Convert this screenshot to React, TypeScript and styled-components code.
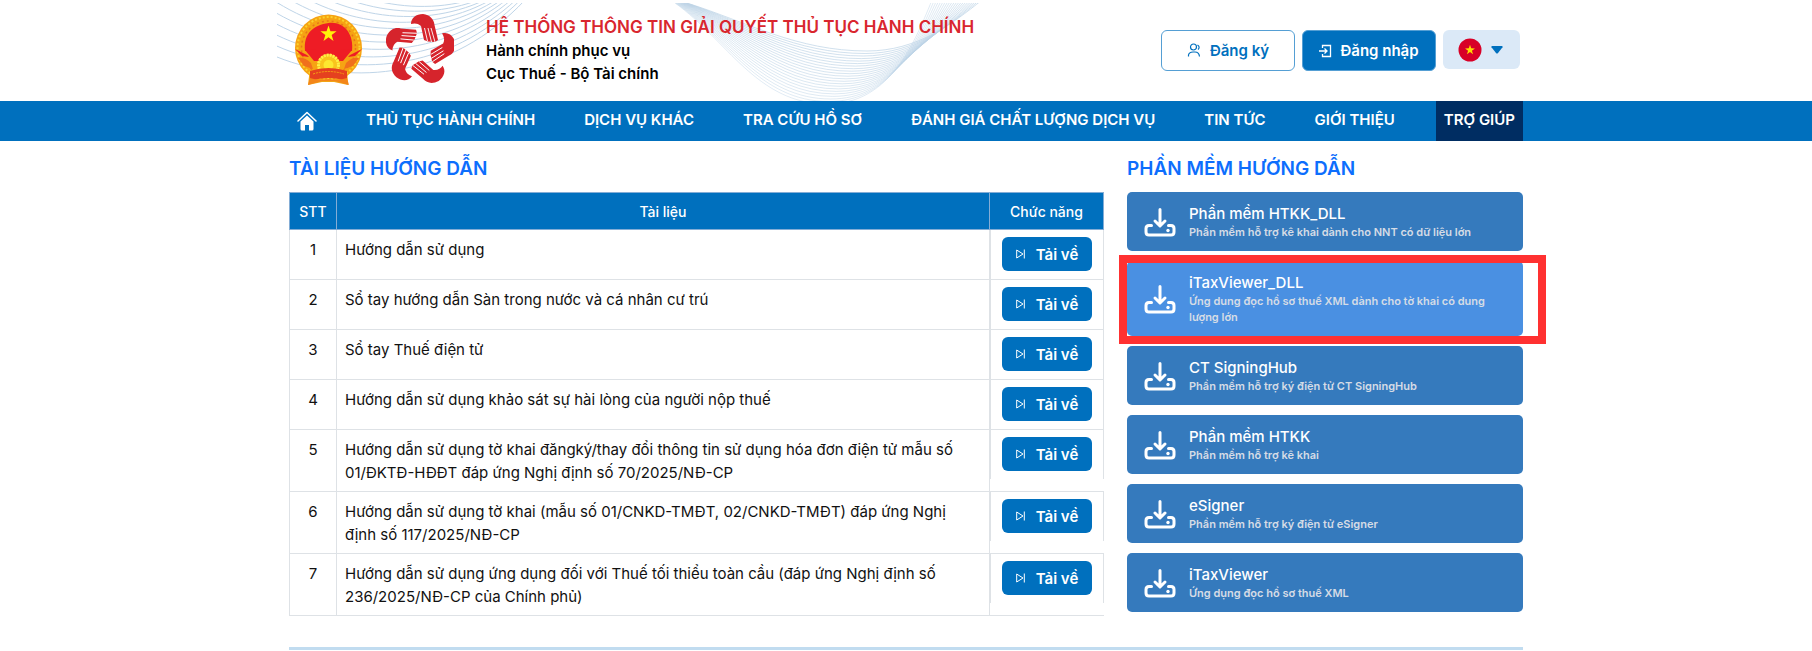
import React from 'react';
import styled, { createGlobalStyle } from 'styled-components';

const BLUE = '#0070be';
const LINE = '#dee2e6';

const GlobalStyle = createGlobalStyle`
  * { box-sizing: border-box; }
  body {
    margin: 0;
    background: #fff;
    color: #111;
    font-family: Inter, "Liberation Sans", sans-serif;
    font-size: 15px;
    line-height: 23px;
  }
  button, select { font-family: inherit; cursor: pointer; }
  a { text-decoration: none; color: inherit; }
  svg { flex-shrink: 0; }
`;

const Container = styled.div`
  width: 100%;
  max-width: 1234px;
  margin: 0 auto;
`;

const Header = styled(Container)`
  position: relative;
  display: flex;
  align-items: flex-start;
  height: 101px;
`;

const Waves = styled.svg`
  position: absolute;
  top: 0;
  left: -12px;
  z-index: -1;
`;

const Logos = styled.a`
  display: flex;
  align-items: center;
  gap: 22px;
  padding: 13px 32px 0 4px;
`;

const Brand = styled.div`
  flex: 1;
  padding-top: 16px;
`;

const BrandTitle = styled.h1`
  margin: 0;
  color: #d9262e;
  font-size: 17px;
  font-weight: 600;
  line-height: 23px;
`;

const BrandLine = styled.p`
  margin: 0;
  color: #000;
  font-size: 15px;
  font-weight: 600;
  line-height: 23px;
`;

const Actions = styled.div`
  display: flex;
  gap: 7px;
  padding: 30px 3px 0 0;
`;

const ActionButton = styled.button<{ $solid?: boolean }>`
  display: flex;
  align-items: center;
  justify-content: center;
  gap: 8px;
  width: 134px;
  height: 41px;
  padding: 0;
  border: 1px solid #559fd4;
  border-radius: 6px;
  background: ${(p) => (p.$solid ? BLUE : '#fff')};
  color: ${(p) => (p.$solid ? '#fff' : BLUE)};
  font-size: 15px;
  font-weight: 600;
`;

const LangButton = styled.button`
  display: flex;
  align-items: center;
  justify-content: center;
  gap: 9px;
  width: 77px;
  height: 39px;
  padding: 0 3px 0 0;
  border: 0;
  border-radius: 6px;
  background: #dbe9f7;
`;

const NavBar = styled.nav`
  background: ${BLUE};
`;

const NavList = styled(Container)`
  display: flex;
  justify-content: space-between;
  height: 40px;
`;

const NavLink = styled.a<{ $active?: boolean }>`
  display: flex;
  align-items: center;
  padding: 0 8px 3px;
  background: ${(p) => (p.$active ? '#002d62' : 'transparent')};
  color: #fff;
  font-size: 15px;
  font-weight: 600;
  white-space: nowrap;
`;

const HomeLink = styled(NavLink)`
  padding-bottom: 0;
`;

const Main = styled(Container)`
  display: grid;
  grid-template-columns: minmax(0, 815px) minmax(0, 396px);
  justify-content: space-between;
  padding: 15px 0 31px;
`;

const SectionTitle = styled.h2`
  margin: 0 0 10px;
  color: #0d6efd;
  font-size: 19px;
  font-weight: 600;
  line-height: 26px;
`;

const DocTable = styled.table`
  width: 100%;
  border-collapse: separate;
  border-spacing: 0;
  table-layout: fixed;
`;

const HeadCell = styled.th<{ $width?: number }>`
  width: ${(p) => (p.$width ? `${p.$width}px` : 'auto')};
  height: 38px;
  padding: 0;
  border: 1px solid #84add6;
  border-left-width: 0;
  background: ${BLUE};
  color: #fff;
  font-size: 14px;
  font-weight: 500;
  &:first-child { border-left-width: 1px; }
`;

const Cell = styled.td<{ $center?: boolean }>`
  height: 50px;
  padding: ${(p) => (p.$center ? '8px 8px 7px' : '8px 16px 7px 8px')};
  border-right: 1px solid ${LINE};
  border-bottom: 1px solid ${LINE};
  text-align: ${(p) => (p.$center ? 'center' : 'left')};
  vertical-align: top;
  &:first-child { border-left: 1px solid ${LINE}; }
`;

const ActionCell = styled.td`
  padding: 0;
  border-bottom: 1px solid ${LINE};
  vertical-align: top;
`;

const ActionBox = styled.div`
  display: flex;
  justify-content: center;
  padding: 7px 0 8px;
  border: 1px solid ${LINE};
  border-width: 0 1px;
`;

const DownloadButton = styled.button`
  display: flex;
  align-items: center;
  justify-content: center;
  gap: 11px;
  width: 90px;
  height: 34px;
  padding: 0;
  border: 0;
  border-radius: 6px;
  background: ${BLUE};
  color: #fff;
  font-size: 15px;
  font-weight: 600;
`;

const CardList = styled.div`
  display: flex;
  flex-direction: column;
  gap: 10px;
`;

const Card = styled.a<{ $hot?: boolean }>`
  position: relative;
  display: flex;
  align-items: center;
  gap: 13px;
  padding: 11px 17px;
  border-radius: 5px;
  background: ${(p) => (p.$hot ? '#4a90e2' : '#357abd')};
  color: #fff;
`;

const CardTitle = styled.div`
  font-size: 15px;
  font-weight: 500;
  line-height: 21px;
`;

const CardText = styled.div`
  color: #d5dce6;
  font-size: 11px;
  font-weight: 600;
  line-height: 16px;
`;

const Marker = styled.div`
  position: absolute;
  inset: -6px -23px -8px -8px;
  border: 8px solid #ff3131;
  pointer-events: none;
`;

const Divider = styled(Container)`
  height: 3px;
  background: #c1dcf0;
`;

/* Interpolates between two curves to draw a family of fine lines. */
function curveFamily(from: number[], to: number[], count: number): string[] {
  return Array.from({ length: count }, (_, i) => {
    const p = from.map((v, k) => Math.round((v + ((to[k] - v) * i) / (count - 1)) * 10) / 10);
    const parts = [`M${p[0]} ${p[1]}`];
    for (let k = 2; k < p.length; k += 6) parts.push(`C${p.slice(k, k + 6).join(' ')}`);
    return parts.join(' ');
  });
}

const leftWave = curveFamily(
  [0, -52, 60, 2, 140, 20, 206, -4],
  [0, 57, 75, 87, 175, 78, 248, 0],
  11,
);
const rightWave = curveFamily(
  [410, 3, 470, 22, 520, 51, 590, 51, 640, 51, 675, 24, 705, 0],
  [398, 3, 450, 40, 480, 104, 550, 104, 610, 104, 635, 50, 655, 0],
  22,
);

const HeaderWaves = () => (
  <Waves width="760" height="101" viewBox="0 0 760 101" fill="none" aria-hidden="true">
    <defs>
      <clipPath id="wave-clip"><rect y="3" width="760" height="98" /></clipPath>
    </defs>
    <g clipPath="url(#wave-clip)">
      {leftWave.map((d, i) => <path key={i} d={d} stroke="#bfd5e8" />)}
      {rightWave.map((d, i) => (
        <path key={i} d={d} stroke="#bcd3e6" strokeOpacity={0.7 - i * 0.012} />
      ))}
    </g>
  </Waves>
);

const starPoints = (cx: number, cy: number, r: number) =>
  Array.from({ length: 10 }, (_, i) => {
    const a = (Math.PI / 5) * i - Math.PI / 2;
    const q = i % 2 ? r * 0.39 : r;
    return `${(cx + q * Math.cos(a)).toFixed(2)},${(cy + q * Math.sin(a)).toFixed(2)}`;
  }).join(' ');

const Emblem = () => (
  <svg width="71" height="73" viewBox="0 0 71 73" aria-hidden="true">
    <path d="M17 55 15 72 29 69H41L55 72 54 55Z" fill="#f2a516" />
    <circle cx="35.500" cy="35" r="33.500" fill="#f6a313" />
    <circle cx="35.500" cy="35" r="31" fill="none" stroke="#fbd22c" strokeWidth="2" strokeDasharray="2 2" />
    <circle cx="35.500" cy="35" r="27" fill="none" stroke="#e8751a" strokeWidth="1.500" strokeDasharray="2 3" />
    <path d="M12 38C10 20 21 12 35.500 10S61 20 59 38Z" fill="#ee1c25" />
    <path d="M2 36 14 42 16 44 9 43ZM69 36 57 42 55 44 62 43Z" fill="#ee1c25" />
    <path d="M5 45Q12 44 18 50L20 56 11 53ZM66 45Q59 44 53 50L51 56 60 53Z" fill="#f0701c" />
    <path d="M12 37 23 36H48L59 37 50 48H21Z" fill="#ee1c25" />
    <polygon points={starPoints(35.5, 21, 8.5)} fill="#fff10a" />
    <circle cx="35.500" cy="52" r="11" fill="#f9c51d" />
    <circle cx="35.500" cy="52" r="10" fill="none" stroke="#fff047" strokeWidth="3" strokeDasharray="2 1" />
    <circle cx="35.500" cy="52" r="5" fill="#fde830" />
    <path d="M17 58Q35.500 52 54 58L54 68Q35.500 62 17 68Z" fill="#e5401f" />
    <path d="M20 61Q35.500 56 51 61" fill="none" stroke="#f6a313" strokeDasharray="2 1" />
    <path d="M15 72 17 65Q25 68 35.500 66Q46 68 54 65L56 72 42 68H29Z" fill="#f3861a" />
  </svg>
);

const HandsLogo = () => (
  <svg width="68" height="73" viewBox="-34 -37 68 73" aria-hidden="true">
    {[0, 72, 144, 216, 288].map((a) => (
      <g key={a} transform={`rotate(${a})`}>
        <path d="M-9 -26C-9 -32 -4 -36 3 -36C10 -35 14 -31 14.500 -25L18 -10L15 -8L8 -8.500L4 -10L1 -24C-2 -27 -6 -27 -9 -26Z" fill="#d6242c" />
        <path d="M4.500 -22 7.500 -9M8 -22 11.500 -8M11 -22 15 -8" stroke="#fff" strokeWidth=".9" />
      </g>
    ))}
  </svg>
);

const UserIcon = () => (
  <svg width="15" height="15" viewBox="0 0 15 15" fill="none" stroke="currentColor" strokeWidth="1.200" aria-hidden="true">
    <circle cx="6.500" cy="4" r="3" />
    <path d="M1.500 13.500V12Q2 9 6 9H8Q12 9 12.500 13.500M10.500 2Q13.500 4 11 6.500" />
  </svg>
);

const LoginIcon = () => (
  <svg width="13" height="14" viewBox="0 0 13 14" fill="none" stroke="currentColor" strokeWidth="1.300" aria-hidden="true">
    <path d="M3.500 4V1.500H11.500V12.500H3.500V10M0 7H8M5.500 4.500 8 7 5.500 9.500" />
  </svg>
);

const FlagIcon = () => (
  <svg width="24" height="24" viewBox="0 0 24 24" aria-hidden="true">
    <circle cx="12" cy="12" r="11.500" fill="#d80027" />
    <polygon points={starPoints(12, 12, 5.2)} fill="#ffda00" />
  </svg>
);

const CaretIcon = () => (
  <svg width="12" height="8" viewBox="0 0 12 8" aria-hidden="true">
    <path d="M1 0H11Q12 .3 11.500 1.300L7 7Q6 8 5 7L.5 1.300Q0 .3 1 0Z" fill={BLUE} />
  </svg>
);

const HomeIcon = () => (
  <svg width="20" height="20" viewBox="0 0 20 20" aria-hidden="true">
    <path d="M1 10 10 1.500 19 10" fill="none" stroke="#fff" strokeWidth="1.500" strokeLinecap="round" strokeLinejoin="round" />
    <path d="M10 4.500 16.500 10.500V18Q16.500 19.500 15 19.500H12V14H8V19.500H5Q3.500 19.500 3.500 18V10.500Z" fill="#fff" />
  </svg>
);

const SkipIcon = () => (
  <svg width="9" height="10" viewBox="0 0 9 10" fill="none" stroke="#fff" aria-hidden="true">
    <path d="M.7 1V9L7 5ZM8.300 .5V9.500" />
  </svg>
);

const TrayIcon = () => (
  <svg width="32" height="30" viewBox="0 0 32 30" fill="none" stroke="#fff" strokeWidth="3" strokeLinecap="round" strokeLinejoin="round" aria-hidden="true">
    <path d="M16 2.500V18M11 14 16 19 21 14" />
    <path d="M7.500 18.500H5Q2 18.500 2 21.500V25Q2 28 5 28H27Q30 28 30 25V21.500Q30 18.500 27 18.500H24.500" />
    <circle cx="24" cy="23.500" r="1.700" fill="#fff" stroke="none" />
  </svg>
);

const navItems = [
  'THỦ TỤC HÀNH CHÍNH',
  'DỊCH VỤ KHÁC',
  'TRA CỨU HỒ SƠ',
  'ĐÁNH GIÁ CHẤT LƯỢNG DỊCH VỤ',
  'TIN TỨC',
  'GIỚI THIỆU',
  'TRỢ GIÚP',
];

const documents = [
  'Hướng dẫn sử dụng',
  'Sổ tay hướng dẫn Sàn trong nước và cá nhân cư trú',
  'Sổ tay Thuế điện tử',
  'Hướng dẫn sử dụng khảo sát sự hài lòng của người nộp thuế',
  'Hướng dẫn sử dụng tờ khai đăngký/thay đổi thông tin sử dụng hóa đơn điện tử mẫu số 01/ĐKTĐ-HĐĐT đáp ứng Nghị định số 70/2025/NĐ-CP',
  'Hướng dẫn sử dụng tờ khai (mẫu số 01/CNKD-TMĐT, 02/CNKD-TMĐT) đáp ứng Nghị định số 117/2025/NĐ-CP',
  'Hướng dẫn sử dụng ứng dụng đối với Thuế tối thiểu toàn cầu (đáp ứng Nghị định số 236/2025/NĐ-CP của Chính phủ)',
];

const software = [
  { name: 'Phần mềm HTKK_DLL', text: 'Phần mềm hỗ trợ kê khai dành cho NNT có dữ liệu lớn' },
  { name: 'iTaxViewer_DLL', text: 'Ứng dung đọc hồ sơ thuế XML dành cho tờ khai có dung lượng lớn', hot: true },
  { name: 'CT SigningHub', text: 'Phần mềm hỗ trợ ký điện tử CT SigningHub' },
  { name: 'Phần mềm HTKK', text: 'Phần mềm hỗ trợ kê khai' },
  { name: 'eSigner', text: 'Phần mềm hỗ trợ ký điện tử eSigner' },
  { name: 'iTaxViewer', text: 'Ứng dụng đọc hồ sơ thuế XML' },
];

export default function App() {
  return (
    <>
      <GlobalStyle />
      <Header as="header">
        <HeaderWaves />
        <Logos href="#" aria-label="Trang chủ">
          <Emblem />
          <HandsLogo />
        </Logos>
        <Brand>
          <BrandTitle>HỆ THỐNG THÔNG TIN GIẢI QUYẾT THỦ TỤC HÀNH CHÍNH</BrandTitle>
          <BrandLine>Hành chính phục vụ</BrandLine>
          <BrandLine>Cục Thuế - Bộ Tài chính</BrandLine>
        </Brand>
        <Actions>
          <ActionButton type="button"><UserIcon />Đăng ký</ActionButton>
          <ActionButton type="button" $solid><LoginIcon />Đăng nhập</ActionButton>
          <LangButton type="button" aria-label="Tiếng Việt"><FlagIcon /><CaretIcon /></LangButton>
        </Actions>
      </Header>
      <NavBar>
        <NavList>
          <HomeLink href="#" aria-label="Trang chủ"><HomeIcon /></HomeLink>
          {navItems.map((item) => (
            <NavLink key={item} href="#" $active={item === 'TRỢ GIÚP'}>{item}</NavLink>
          ))}
        </NavList>
      </NavBar>
      <Main as="main">
        <section>
          <SectionTitle>TÀI LIỆU HƯỚNG DẪN</SectionTitle>
          <DocTable>
            <thead>
              <tr>
                <HeadCell scope="col" $width={48}>STT</HeadCell>
                <HeadCell scope="col">Tài liệu</HeadCell>
                <HeadCell scope="col" $width={114}>Chức năng</HeadCell>
              </tr>
            </thead>
            <tbody>
              {documents.map((doc, i) => (
                <tr key={doc}>
                  <Cell $center>{i + 1}</Cell>
                  <Cell>{doc}</Cell>
                  <ActionCell>
                    <ActionBox>
                      <DownloadButton type="button"><SkipIcon />Tải về</DownloadButton>
                    </ActionBox>
                  </ActionCell>
                </tr>
              ))}
            </tbody>
          </DocTable>
        </section>
        <section>
          <SectionTitle>PHẦN MỀM HƯỚNG DẪN</SectionTitle>
          <CardList>
            {software.map((s) => (
              <Card key={s.name} href="#" $hot={s.hot}>
                <TrayIcon />
                <div>
                  <CardTitle>{s.name}</CardTitle>
                  <CardText>{s.text}</CardText>
                </div>
                {s.hot && <Marker />}
              </Card>
            ))}
          </CardList>
        </section>
      </Main>
      <Divider />
    </>
  );
}
